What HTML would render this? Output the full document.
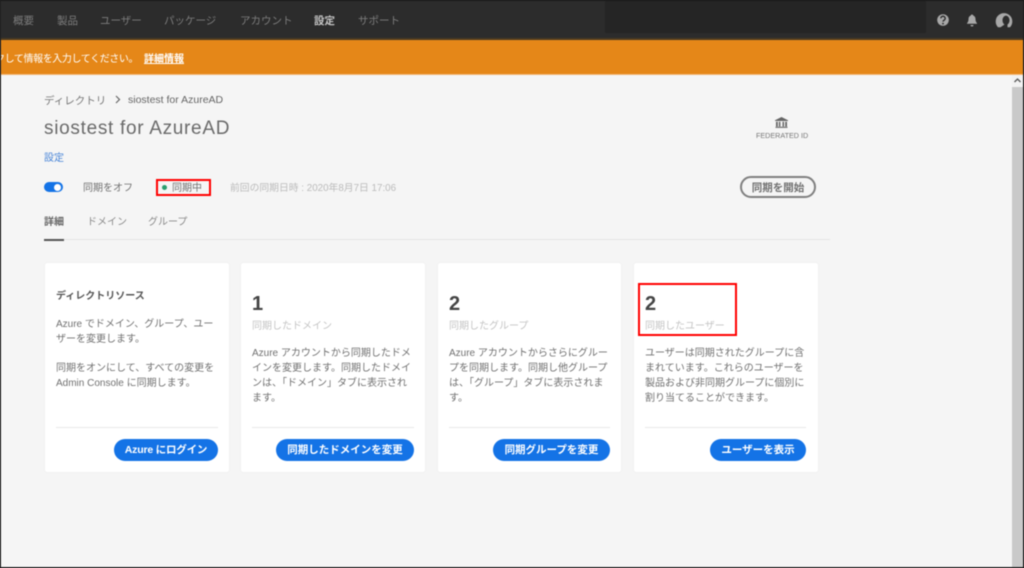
<!DOCTYPE html>
<html lang="ja"><head><meta charset="utf-8"><title>siostest for AzureAD</title>
<style>
html,body{margin:0;padding:0;width:1024px;height:568px;overflow:hidden;background:#222}
#p{position:relative;width:1024px;height:568px;overflow:hidden;background:#f5f5f5;font-family:"Liberation Sans","Noto Sans CJK JP",sans-serif;color:#6e6e6e;font-size:10px;filter:blur(.45px)}
#p div{position:absolute;white-space:nowrap}
.nav{top:14px;font-size:10.5px;color:#7d7d7d;line-height:14px}
.card{top:263px;width:184px;height:209px;background:#fff;border-radius:2px;box-shadow:0 0 1px #ddd}
.hr{top:427px;height:1px;background:#e8e8e8}
.btn{top:439px;height:22px;line-height:23px;background:#1473e6;border-radius:11px;color:#fff;font-weight:bold;font-size:10.5px;text-align:center}
.num{top:292px;font-size:20px;font-weight:bold;color:#444;line-height:24px}
.sub{top:320px;font-size:10px;color:#c4c4c4;line-height:14px}
.l{font-size:10px;color:#707070;line-height:14px}
.red{border:2px solid #f00;box-sizing:border-box}
</style></head><body><div id="p">
<div style="left:0;top:0;width:1024px;height:40px;background:#2c2c2c"></div>
<div style="left:605px;top:1px;width:321px;height:32px;background:#252525"></div>
<div style="left:0;top:38px;width:1024px;height:2px;background:#4a3a22"></div>
<div class="nav" style="left:13px">概要</div>
<div class="nav" style="left:57px">製品</div>
<div class="nav" style="left:100px">ユーザー</div>
<div class="nav" style="left:164px">パッケージ</div>
<div class="nav" style="left:240px">アカウント</div>
<div class="nav" style="left:314px;color:#c4c4c4;font-weight:bold">設定</div>
<div class="nav" style="left:358px">サポート</div>
<svg style="position:absolute;left:930px;top:8px" width="90" height="24" viewBox="0 0 90 24">
<circle cx="13" cy="12" r="5.8" fill="#a8a8a8"/>
<path d="M10.8 10.3a2.2 2.1 0 1 1 3.4 1.8c-.8.5-1.2.8-1.2 1.5" fill="none" stroke="#2c2c2c" stroke-width="1.4"/><circle cx="13" cy="15.6" r=".9" fill="#2c2c2c"/>
<path d="M42 6.5c-.8 0-1.2.5-1.3 1.1-1.5.5-2.2 1.8-2.2 3.4 0 2-.5 3.100-1.500 4.200v.6h10v-.6c-1-1.100-1.500-2.200-1.500-4.200 0-1.600-.7-2.900-2.200-3.400-.1-.6-.5-1.100-1.300-1.100zM40.500 17h3a1.500 1.500 0 0 1-3 0z" fill="#a8a8a8"/>
<path d="M70.500 19.200h-2.500a8.300 8.300 0 1 1 12 0h-2.500v-2.700c1.300-.9 2-2.400 2-4.300 0-2.700-1.900-4.600-3.500-4.600s-3.500 1.900-3.500 4.600c0 1.900.7 3.400 2 4.300z" fill="#a8a8a8"/>
</svg>
<div style="left:0;top:40px;width:1024px;height:34px;background:#e58718;border-bottom:1px solid #f2b878"></div>
<div style="left:-5px;top:53px;font-size:10px;letter-spacing:-.4px;color:#fff;line-height:14px">クして情報を入力してください。</div>
<div style="left:144px;top:53px;font-size:10px;font-weight:bold;color:#fff;line-height:14px;text-decoration:underline">詳細情報</div>

<div style="left:44px;top:94px;font-size:10.5px;color:#777;line-height:14px">ディレクトリ</div>
<svg style="position:absolute;left:114px;top:95px" width="8" height="9" viewBox="0 0 8 9"><path d="M2 1l3.500 3.500L2 8" fill="none" stroke="#666" stroke-width="1.200"/></svg>
<div style="left:128px;top:93px;font-size:10.500px;color:#666;line-height:14px">siostest for AzureAD</div>
<div style="left:44px;top:117px;font-size:19px;color:#6a6a6a;line-height:24px;letter-spacing:.7px">siostest for AzureAD</div>
<div style="left:44px;top:152px;font-size:10px;color:#4a86d8;line-height:14px">設定</div>

<div style="left:44px;top:182px;width:19px;height:10px;background:#1473e6;border-radius:5px"></div>
<div style="left:54px;top:183.500px;width:7px;height:7px;background:#fff;border-radius:50%"></div>
<div style="left:83px;top:182px;font-size:10px;color:#707070;line-height:14px">同期をオフ</div>
<div style="left:161.500px;top:184.500px;width:5px;height:5px;background:#2a9d6e;border-radius:50%"></div>
<div style="left:172px;top:182px;font-size:10px;color:#707070;line-height:14px">同期中</div>
<div class="red" style="left:156px;top:179px;width:55px;height:17px"></div>
<div style="left:230px;top:182px;font-size:9.800px;color:#bbb;line-height:14px">前回の同期日時 : 2020年8月7日 17:06</div>

<svg style="position:absolute;left:774px;top:116px" width="15" height="13" viewBox="0 0 15 13"><path d="M7.500 1L1 4.200v.8h13v-.8zM2 5.800h1.800v4.700H2zM4.900 5.800h1.500v4.700H4.900zM8.500 5.800h1.500v4.700H8.500zM11.200 5.800H13v4.700h-1.800zM1.500 10.800h12v1.100h-12z" fill="#666"/></svg>
<div style="left:756px;top:130px;font-size:7.200px;color:#777;line-height:12px">FEDERATED ID</div>
<div style="left:740px;top:176px;width:76px;height:22px;box-sizing:border-box;border:2px solid #808080;border-radius:11px;text-align:center;font-size:10.500px;font-weight:bold;color:#707070;line-height:20px">同期を開始</div>

<div style="left:44px;top:216px;font-size:10px;color:#666;font-weight:bold;line-height:14px">詳細</div>
<div style="left:87px;top:216px;font-size:10px;color:#8a8a8a;line-height:14px">ドメイン</div>
<div style="left:148px;top:216px;font-size:10px;color:#8a8a8a;line-height:14px">グループ</div>
<div style="left:44px;top:239px;width:786px;height:1px;background:#e4e4e4"></div>
<div style="left:44px;top:238.500px;width:20px;height:2px;background:#555"></div>

<div class="card" style="left:45px"></div>
<div class="card" style="left:241px"></div>
<div class="card" style="left:438px;width:183px"></div>
<div class="card" style="left:634px"></div>

<div style="left:56px;top:290px;font-size:10px;font-weight:bold;color:#555;line-height:14px">ディレクトリソース</div>
<div class="l" style="left:56px;top:318px">Azure でドメイン、グループ、ユー</div>
<div class="l" style="left:56px;top:333px">ザーを変更します。</div>
<div class="l" style="left:56px;top:362px">同期をオンにして、すべての変更を</div>
<div class="l" style="left:56px;top:377px">Admin Console に同期します。</div>
<div class="hr" style="left:56px;width:162px"></div>
<div class="btn" style="left:114px;width:104px;letter-spacing:-.2px">Azure にログイン</div>

<div class="num" style="left:252px">1</div>
<div class="sub" style="left:252px">同期したドメイン</div>
<div class="l" style="left:252px;top:347px">Azure アカウントから同期したドメ</div>
<div class="l" style="left:252px;top:362px">インを変更します。同期したドメイ</div>
<div class="l" style="left:252px;top:377px">ンは、「ドメイン」タブに表示され</div>
<div class="l" style="left:252px;top:392px">ます。</div>
<div class="hr" style="left:252px;width:162px"></div>
<div class="btn" style="left:276px;width:138px">同期したドメインを変更</div>

<div class="num" style="left:449px">2</div>
<div class="sub" style="left:449px">同期したグループ</div>
<div class="l" style="left:449px;top:347px">Azure アカウントからさらにグルー</div>
<div class="l" style="left:449px;top:362px">プを同期します。同期し他グループ</div>
<div class="l" style="left:449px;top:377px">は、「グループ」タブに表示されま</div>
<div class="l" style="left:449px;top:392px">す。</div>
<div class="hr" style="left:449px;width:161px"></div>
<div class="btn" style="left:493px;width:117px">同期グループを変更</div>

<div class="num" style="left:645px">2</div>
<div class="sub" style="left:645px">同期したユーザー</div>
<div class="red" style="left:638px;top:283px;width:99px;height:53px"></div>
<div class="l" style="left:645px;top:347px">ユーザーは同期されたグループに含</div>
<div class="l" style="left:645px;top:362px">まれています。これらのユーザーを</div>
<div class="l" style="left:645px;top:377px">製品および非同期グループに個別に</div>
<div class="l" style="left:645px;top:392px">割り当てることができます。</div>
<div class="hr" style="left:645px;width:161px"></div>
<div class="btn" style="left:710px;width:96px">ユーザーを表示</div>

<div style="left:1012px;top:75px;width:11px;height:12px;background:#f2f2f2"></div>
<svg style="position:absolute;left:1013px;top:77px" width="9" height="7" viewBox="0 0 9 7"><path d="M1.500 5L4.500 2l3 3" fill="none" stroke="#555" stroke-width="1.300"/></svg>
<div style="left:1012px;top:87px;width:11px;height:481px;background:#c9c9c9"></div>

<div style="left:0;top:0;width:1px;height:568px;background:#222"></div>
<div style="left:1023px;top:0;width:1px;height:568px;background:#222"></div>
<div style="left:0;top:0;width:1024px;height:1px;background:#1a1a1a"></div>
<div style="left:0;top:567px;width:1024px;height:1px;background:#222"></div>
</div></body></html>
